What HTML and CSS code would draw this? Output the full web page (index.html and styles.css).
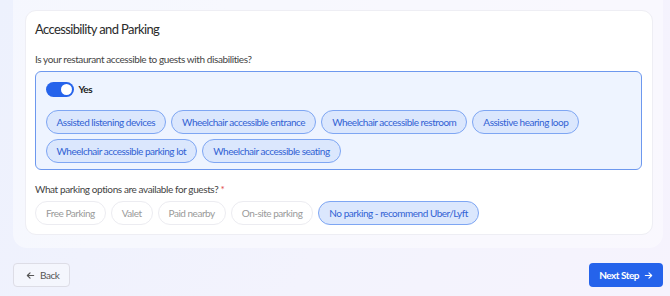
FILE: index.html
```html
<!DOCTYPE html>
<html lang="en">
<head>
    <meta charset="UTF-8">
    <meta name="viewport" content="width=device-width, initial-scale=1.0">
    <title>Accessibility and Parking</title>
    <link rel="stylesheet" href="styles.css">
</head>
<body>

    <div class="step-panel">
        <div class="card">
            <h2 class="card-title">Accessibility and Parking</h2>

            <p class="question">Is your restaurant accessible to guests with disabilities?</p>

            <!-- Accessibility block -->
            <div class="access-box">
                <label class="toggle-row">
                    <span class="toggle on"><span class="knob"></span></span>
                    <span class="toggle-label">Yes</span>
                </label>
                <div class="chips">
                    <span class="chip selected">Assisted listening devices</span>
                    <span class="chip selected">Wheelchair accessible entrance</span>
                    <span class="chip selected">Wheelchair accessible restroom</span>
                    <span class="chip selected">Assistive hearing loop</span>
                    <span class="chip selected">Wheelchair accessible parking lot</span>
                    <span class="chip selected">Wheelchair accessible seating</span>
                </div>
            </div>

            <p class="question parking-q">What parking options are available for guests? <span class="required">*</span></p>
            <div class="chips">
                <span class="chip">Free Parking</span>
                <span class="chip">Valet</span>
                <span class="chip">Paid nearby</span>
                <span class="chip">On-site parking</span>
                <span class="chip selected">No parking - recommend Uber/Lyft</span>
            </div>
        </div>
    </div>

    <div class="nav-buttons">
        <button class="btn btn-back">
            <svg width="9" height="9" viewBox="0 0 10 10" fill="none" stroke="currentColor" stroke-width="1.3" stroke-linecap="round" stroke-linejoin="round"><path d="M8.5 5H1.5M4.5 2L1.5 5L4.5 8"/></svg>
            Back
        </button>
        <button class="btn btn-next">
            Next Step
            <svg width="9" height="9" viewBox="0 0 10 10" fill="none" stroke="currentColor" stroke-width="1.3" stroke-linecap="round" stroke-linejoin="round"><path d="M1.5 5H8.5M5.5 2L8.5 5L5.5 8"/></svg>
        </button>
    </div>

</body>
</html>
```

FILE: styles.css
```css
body {
    font-family: 'Lato', 'Noto Sans', sans-serif;
    letter-spacing: -0.03em;
    margin: 0;
    padding: 0 7px 0 13px;
    height: 296px;
    overflow: hidden;
    background: linear-gradient(120deg, #edf1fd 0%, #f3f3fd 55%, #f6f3fd 100%);
    color: #333;
}

.step-panel {
    margin-top: -20px;
    padding: 30px 10px 13px 12px;
    background: rgba(255, 255, 255, 0.45);
    border-radius: 14px;
}

.card {
    background: #fff;
    border: 1px solid #eeeef4;
    border-radius: 11px;
    padding: 10px 10px 9px 9px;
}

.card-title {
    font-size: 13px;
    line-height: 16px;
    font-weight: 400;
    letter-spacing: -0.048em;
    color: #2b2b2b;
    margin: 0 0 16px;
}

.question {
    font-size: 10px;
    line-height: 12px;
    letter-spacing: -0.04em;
    color: #444;
    margin: 0 0 6px;
}

.parking-q {
    margin-top: 13px;
}

.required {
    color: #e04848;
}

/* Accessibility block */
.access-box {
    background: #eef4ff;
    border: 1.5px solid #6d98ee;
    border-radius: 6px;
    padding: 9.5px 10px 6.5px 9.5px;
}

.toggle-row {
    display: flex;
    align-items: center;
    gap: 5px;
    margin-bottom: 13px;
}

.toggle {
    width: 28px;
    height: 15px;
    border-radius: 8px;
    background: #2563eb;
    position: relative;
}

.toggle .knob {
    position: absolute;
    top: 2px;
    right: 2px;
    width: 11px;
    height: 11px;
    border-radius: 50%;
    background: #fff;
}

.toggle-label {
    font-size: 10px;
    font-weight: 700;
    color: #222;
}

.chips {
    display: flex;
    flex-wrap: wrap;
    gap: 5px;
}

.chip {
    font-size: 10px;
    line-height: 22px;
    padding: 0 10px;
    border-radius: 12px;
    border: 1px solid #ececf1;
    background: #fff;
    color: #9a9a9a;
}

.chip.selected {
    background: #dbe7fd;
    border-color: #7ea6f3;
    color: #3162d4;
}

/* Bottom buttons */
.nav-buttons {
    display: flex;
    justify-content: space-between;
    margin-top: 15px;
}

.btn {
    display: flex;
    align-items: center;
    gap: 5px;
    height: 24px;
    border-radius: 4px;
    font-family: inherit;
    letter-spacing: inherit;
    font-size: 10px;
    cursor: pointer;
}

.btn-back {
    padding: 0 10px 0 12px;
    background: rgba(255, 255, 255, 0.3);
    border: 1px solid #dddde6;
    color: #555;
}

.btn-next {
    padding: 0 10px;
    background: #2563eb;
    border: none;
    color: #fff;
    font-weight: 700;
}
```
